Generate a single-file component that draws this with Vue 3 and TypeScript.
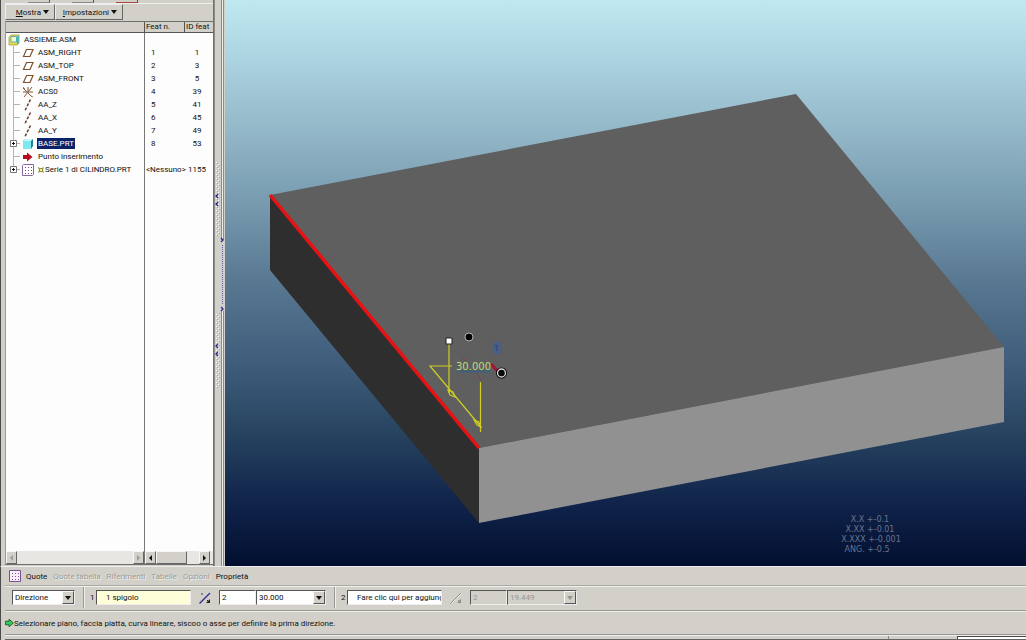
<script setup lang="ts">
import { ref } from 'vue'

type IconKind = 'asm' | 'plane' | 'csys' | 'axis' | 'part' | 'insert' | 'pattern'

interface TreeRow {
  icon: IconKind
  label: string
  feat: string
  id: string
  root?: boolean
  expandable?: boolean
  selected?: boolean
  marked?: boolean
  last?: boolean
}

const rows: TreeRow[] = [
  { icon: 'asm', label: 'ASSIEME.ASM', feat: '', id: '', root: true },
  { icon: 'plane', label: 'ASM_RIGHT', feat: '1', id: '1' },
  { icon: 'plane', label: 'ASM_TOP', feat: '2', id: '3' },
  { icon: 'plane', label: 'ASM_FRONT', feat: '3', id: '5' },
  { icon: 'csys', label: 'ACS0', feat: '4', id: '39' },
  { icon: 'axis', label: 'AA_Z', feat: '5', id: '41' },
  { icon: 'axis', label: 'AA_X', feat: '6', id: '45' },
  { icon: 'axis', label: 'AA_Y', feat: '7', id: '49' },
  { icon: 'part', label: 'BASE.PRT', feat: '8', id: '53', expandable: true, selected: true },
  { icon: 'insert', label: 'Punto inserimento', feat: '', id: '' },
  { icon: 'pattern', label: 'Serie 1 di CILINDRO.PRT', feat: '<Nessuno>', id: '1155', expandable: true, marked: true, last: true },
]

const tabs = [
  { label: 'Quote', enabled: true },
  { label: 'Quote tabella', enabled: false },
  { label: 'Riferimenti', enabled: false },
  { label: 'Tabelle', enabled: false },
  { label: 'Opzioni', enabled: false },
  { label: 'Proprietà', enabled: true },
]

const first = ref('1 spigolo')
const firstCount = ref('2')
const second = ref('Fare clic qui per aggiungere un elemento')
const secondCount = ref('2')
</script>

<template>
  <div class="app">
    <main class="work">
      <aside class="panel">
        <div class="stub"><i></i><i></i><i class="hot"></i></div>
        <div class="menus">
          <button type="button" class="menu"><span><u>M</u>ostra</span><b class="down"></b></button>
          <button type="button" class="menu wide"><span><u>I</u>mpostazioni</span><b class="down"></b></button>
        </div>
        <div class="tree">
          <table>
            <colgroup><col class="c-name" /><col class="c-feat" /><col class="c-id" /></colgroup>
            <thead>
              <tr><th aria-label="Nome"></th><th>Feat n.</th><th>ID feat</th></tr>
            </thead>
            <tbody>
              <tr v-for="row in rows" :key="row.label">
                <td>
                  <div class="node" :class="{ root: row.root }">
                    <span v-if="!row.root" class="branch" :class="{ last: row.last }">
                      <button v-if="row.expandable" type="button" class="plus" :aria-label="'Espandi ' + row.label">
                        <svg viewBox="0 0 7 7"><path d="M.5 .5h6v6h-6z" fill="#fff" stroke="#777" /><path d="M2 3.5h3M3.5 2v3" stroke="#111" /></svg>
                      </button>
                    </span>
                    <svg class="icon" viewBox="0 0 12 12" aria-hidden="true">
                      <template v-if="row.icon === 'asm'">
                        <path d="M1 3l2-2h8v8l-2 2H1z" fill="#e9dc4e" stroke="#99903a" stroke-width=".7" />
                        <path d="M9 3l2-2v8l-2 2z" fill="#45b8c2" />
                        <path d="M3 2.500h5.500V8H3z" fill="#f2fad6" stroke="#5ab0ac" stroke-width="1" />
                      </template>
                      <path v-else-if="row.icon === 'plane'" d="M4.500 2.500H11l-3 7H1.500z" fill="#fff" stroke="#81502e" stroke-width="1.2" />
                      <template v-else-if="row.icon === 'csys'">
                        <path d="M1 2l9 9M10 1L2 11M6 6h5M6 6V1M1 6h4" stroke="#805538" fill="none" />
                        <path d="M1 1l2 2M9 10l2 1" stroke="#b97952" />
                      </template>
                      <path v-else-if="row.icon === 'axis'" d="M8.500 .5L3 11.500" stroke="#713b33" stroke-width="1.500" stroke-dasharray="3 1.500" />
                      <template v-else-if="row.icon === 'part'">
                        <path d="M1 3l2-2h8v7l-2 3H1z" fill="#287d91" />
                        <path d="M1 3h8v8H1z" fill="#7be9ee" />
                        <path d="M1 3l2-2h8L9 3z" fill="#c2fafa" />
                      </template>
                      <path v-else-if="row.icon === 'insert'" d="M1 4h4V1.500L10.500 6 5 10.500V8H1z" fill="#b50d22" />
                      <template v-else>
                        <path d="M.5 1.500l1-1h10v10l-1 1H.5z" fill="#fff" stroke="#87659d" />
                        <path d="M3 3h1v1H3zM6 3h1v1H6zM9 3h1v1H9zM3 6h1v1H3zM6 6h1v1H6zM9 6h1v1H9zM3 9h1v1H3zM6 9h1v1H6zM9 9h1v1H9z" fill="#714187" />
                      </template>
                    </svg>
                    <svg v-if="row.marked" class="mark" viewBox="0 0 6 6"><path d="M0 0l2 1h2l2-1-1 3 1 3-2-1H2L0 6l1-3z" fill="#95923a" /><path d="M2 2h2v2H2z" fill="#f5f28c" /></svg>
                    <span class="name" :class="{ selected: row.selected, marked: row.marked }">{{ row.label }}</span>
                  </div>
                </td>
                <td class="feat">{{ row.feat }}</td>
                <td class="id">{{ row.id }}</td>
              </tr>
              <tr class="fill"><td></td><td colspan="2"></td></tr>
            </tbody>
          </table>
          <div class="scrolls">
            <div class="scroll name-scroll">
              <button type="button" class="arrow left off" aria-label="Sinistra"></button>
              <span class="track"></span>
              <button type="button" class="arrow right off" aria-label="Destra"></button>
            </div>
            <div class="scroll data-scroll">
              <button type="button" class="arrow left" aria-label="Sinistra"></button>
              <span class="thumb"></span><span class="track"></span>
              <button type="button" class="arrow right" aria-label="Destra"></button>
            </div>
          </div>
        </div>
      </aside>

      <div class="sash">
        <svg viewBox="0 0 11 566" preserveAspectRatio="none" aria-hidden="true">
          <defs>
            <pattern id="grip" width="4" height="4" patternUnits="userSpaceOnUse">
              <path d="M0 0h1v1H0zM2 2h1v1H2z" fill="#fff" /><path d="M1 1h1v1H1zM3 3h1v1H3z" fill="#a3a39e" />
            </pattern>
          </defs>
          <path d="M.5 0v566M7.500 0v240M9.500 0v240M7.500 311v255M9.500 311v255" stroke="#8b8b89" />
          <path d="M8.500 0v240M8.500 311v255" stroke="#eeeeea" />
          <path d="M2 162h4v74H2zM2 313h4v75H2z" fill="url(#grip)" />
          <g fill="none" stroke="#28288f" stroke-width="1.300">
            <path d="M4 194l-2 2 2 2M4 202l-2 2 2 2M4 344l-2 2 2 2M4 352l-2 2 2 2M7 238l2 2-2 2M7 307l2 2-2 2" />
          </g>
          <path d="M8.500 245v60" stroke="#5a5aa5" stroke-dasharray="1 1" />
        </svg>
      </div>

      <section class="view" aria-label="Modello">
        <svg viewBox="225 0 801 566" preserveAspectRatio="xMidYMid slice">
          <path d="M270 195L796 94 1004 347 479 448z" fill="#5f5f5f" />
          <path d="M270 195L479 448V523L270 270z" fill="#2e2e2e" />
          <path d="M479 448L1004 347V422L479 523z" fill="#919191" />
          <path d="M270 195L479 448" stroke="#e81114" stroke-width="3.500" />
          <path d="M461 356l5 5M477 374l4 6" stroke="#823c4c" />
          <ellipse cx="497" cy="348" rx="5" ry="7" fill="#49617f" />
          <path d="M495 346l2-1v6" fill="none" stroke="#37369a" />
          <path d="M458 371.500h33" stroke="#3e607d" stroke-width="2" />
          <g fill="none" stroke="#cfcc22" stroke-width="1.200">
            <path d="M449 344v49M452 366h-22l51 61M480.500 382v50" />
            <path d="M448 390l2 5 5 2-2-5zM474 420l3 5 4 2-2-5z" />
          </g>
          <path d="M446 338h6v6h-6z" fill="#fff" stroke="#222" />
          <path d="M491 364l8 9" stroke="#a51536" stroke-width="3" />
          <circle cx="469" cy="337" r="4" fill="#000" stroke="#b4b4b4" />
          <circle cx="501.500" cy="373" r="4.500" fill="#090909" stroke="#000" stroke-width="2" />
          <circle cx="501.500" cy="373" r="4" fill="#090909" stroke="#ddd" stroke-width="1.300" />
          <text x="456" y="370" class="dim">30.000</text>
          <g class="tolerance">
            <text x="870" y="522">X.X +-0.1</text>
            <text x="870" y="532">X.XX +-0.01</text>
            <text x="871" y="542">X.XXX +-0.001</text>
            <text x="867" y="552">ANG. +-0.5</text>
          </g>
        </svg>
      </section>
    </main>

    <footer class="dash">
      <nav class="tabs">
        <svg class="tab-icon" viewBox="0 0 12 12" aria-hidden="true">
          <path d="M.5 .5h11v11H.5z" fill="#f8effa" stroke="#76528e" />
          <path d="M3 3h1v1H3zM6 3h1v1H6zM9 3h1v1H9zM3 6h1v1H3zM6 6h1v1H6zM9 6h1v1H9zM3 9h1v1H3zM6 9h1v1H6zM9 9h1v1H9z" fill="#8a4d98" />
        </svg>
        <button v-for="tab in tabs" :key="tab.label" type="button" :disabled="!tab.enabled">{{ tab.label }}</button>
      </nav>
      <form class="options" @submit.prevent>
        <span class="combo kind">
          <select aria-label="Tipo di serie"><option>Direzione</option></select><i class="drop"></i>
        </span>
        <span class="rule"></span>
        <label for="dir1">1</label>
        <input id="dir1" v-model="first" class="collector active" />
        <button type="button" class="flip" aria-label="Inverti prima direzione">
          <svg viewBox="0 0 14 14"><path d="M1.500 12.500L12 2" stroke="#343591" stroke-width="1.400" /><path d="M3 2l2 2M3 4l2-2" stroke="#888" /><path d="M9 9l2 2" stroke="#222" /><path d="M12 8v4H8z" fill="#222" /></svg>
        </button>
        <input v-model="firstCount" class="count" aria-label="Numero di elementi, prima direzione" />
        <span class="combo value">
          <select aria-label="Spaziatura, prima direzione"><option>30.000</option></select><i class="drop"></i>
        </span>
        <span class="rule"></span>
        <label for="dir2">2</label>
        <input id="dir2" v-model="second" class="collector" />
        <button type="button" class="flip" aria-label="Inverti seconda direzione" disabled>
          <svg viewBox="0 0 14 14"><path d="M1.500 12.500L12 2M9 9l2 2" stroke="#8d8d8a" /><path d="M2.500 12.500L13 2" stroke="#fff" stroke-width=".6" /><path d="M12 8v4H8z" fill="#8d8d8a" /></svg>
        </button>
        <input v-model="secondCount" class="count" aria-label="Numero di elementi, seconda direzione" disabled />
        <span class="combo value off">
          <select aria-label="Spaziatura, seconda direzione" disabled><option>19.449</option></select><i class="drop"></i>
        </span>
      </form>
      <p class="message">
        <svg viewBox="0 0 10 10" aria-hidden="true"><path d="M.5 3h4V.8L9.300 5 4.500 9.200V7h-4z" fill="#2fcb5c" stroke="#175c31" /></svg>
        Selezionare piano, faccia piatta, curva lineare, siscoo o asse per definire la prima direzione.
      </p>
      <div class="status"><span class="slot"></span><span class="filter"></span></div>
    </footer>
  </div>
</template>

<style>
body {
  margin: 0;
  overflow: hidden;
}
</style>

<style scoped>
.app {
  --face: #d3d0c9;
  box-sizing: border-box;
  display: flex;
  flex-direction: column;
  height: 100vh;
  background: var(--face);
  color: #101010;
  font: 8px/13px Roboto, "Liberation Sans", sans-serif;
}

.app * {
  box-sizing: border-box;
}

button,
input,
select {
  margin: 0;
  padding: 0;
  border: 0;
  border-radius: 0;
  background: none;
  color: inherit;
  font: inherit;
}

svg {
  display: block;
}

.work {
  flex: 1;
  min-height: 0;
  display: flex;
}

.panel {
  flex: none;
  width: 214px;
  display: flex;
  flex-direction: column;
  padding-left: 4px;
  border-left: 1px solid #4b4b4b;
  border-right: 1px solid #70706e;
}

.stub {
  display: flex;
  gap: 22px;
  height: 4px;
  padding-left: 23px;
  border-bottom: 1px solid #eee;
}

.stub i {
  width: 22px;
  height: 3px;
  border-right: 1px solid #555;
  border-bottom: 1px solid #8b8b89;
}

.stub .hot {
  border-bottom-color: #a44a3c;
}

.menus {
  display: flex;
  height: 17px;
  padding-bottom: 1px;
}

.menu {
  display: flex;
  align-items: center;
  justify-content: flex-end;
  gap: 2px;
  width: 50px;
  padding-right: 5px;
  border: 1px solid;
  border-color: #eee #666 #666 #eee;
}

.menu.wide {
  width: 68px;
}

.down {
  border: 3px solid transparent;
  border-top: 4px solid #111;
  border-bottom: 0;
}

.tree {
  flex: 1;
  min-height: 0;
  display: flex;
  flex-direction: column;
  margin-bottom: 1px;
  background: #fdfdfd;
  border: 1px solid #70706e;
  border-right: 0;
  border-left-color: #999;
}

table {
  flex: 1;
  width: 100%;
  table-layout: fixed;
  border-collapse: separate;
  border-spacing: 0;
}

.c-name {
  width: 139px;
}

.c-feat {
  width: 40px;
}

th,
td {
  height: 13px;
  padding: 0;
  font-weight: normal;
  white-space: nowrap;
}

th {
  height: 11px;
  line-height: 10px;
  padding-left: 1px;
  background: var(--face);
  border-bottom: 1px solid #555;
  border-right: 1px solid #555;
  text-align: left;
}

th:last-child {
  border-right: 0;
}

td:first-child {
  border-right: 1px solid #777;
}

td.feat {
  padding-left: 6px;
}

tr:nth-last-child(2) td.feat {
  padding-left: 1px;
}

td.id {
  padding-right: 4px;
  text-align: center;
}

.fill td {
  height: auto;
}

.node {
  display: flex;
  align-items: center;
  height: 13px;
}

.branch {
  flex: none;
  display: flex;
  align-items: center;
  width: 14px;
  height: 13px;
  padding-left: 4px;
  background:
    linear-gradient(#b4b4b4, #b4b4b4) 7px 0 / 1px 13px no-repeat,
    linear-gradient(#b4b4b4, #b4b4b4) 7px 6px / 7px 1px no-repeat;
}

.branch.last {
  background:
    linear-gradient(#b4b4b4, #b4b4b4) 7px 0 / 1px 7px no-repeat,
    linear-gradient(#b4b4b4, #b4b4b4) 7px 6px / 7px 1px no-repeat;
}

.plus,
.plus svg {
  width: 7px;
  height: 7px;
}

.icon {
  flex: none;
  width: 12px;
  height: 12px;
  margin-left: 2px;
}

.name {
  margin-left: 3px;
  padding: 0 1px;
  line-height: 11px;
}

.name.selected {
  background: #0b2268;
  color: #fff;
}

.mark {
  flex: none;
  width: 6px;
  height: 6px;
  margin-left: 4px;
}

.name.marked {
  margin-left: 0;
}

.scrolls {
  display: flex;
  height: 13px;
  background: #e7e6e2;
}

.scroll {
  display: flex;
}

.name-scroll {
  width: 139px;
  border-right: 1px solid #777;
}

.data-scroll {
  flex: 1;
  padding-right: 3px;
}

.arrow {
  display: grid;
  place-items: center;
  width: 11px;
  background: var(--face);
  border: 1px solid;
  border-color: #f7f7f5 #666 #666 #f7f7f5;
}

.arrow::before {
  content: "";
  border: 3px solid transparent;
}

.arrow.left::before {
  border-left: 0;
  border-right-color: #111;
}

.arrow.right::before {
  border-right: 0;
  border-left-color: #111;
}

.arrow.off.left::before {
  border-right-color: #999;
}

.arrow.off.right::before {
  border-left-color: #999;
}

.track {
  flex: 1;
}

.thumb {
  width: 31px;
  background: var(--face);
  border: 1px solid;
  border-color: #f7f7f5 #666 #666 #f7f7f5;
}

.sash {
  flex: none;
  width: 11px;
}

.sash svg {
  width: 100%;
  height: 100%;
}

.view {
  flex: 1;
  min-width: 0;
  background: linear-gradient(#bfe9f1 0%, #a9d0de 12%, #8db1c2 26%, #7093a9 39%, #56758f 51%, #3e5c7a 65%, #26425f 77%, #10234a 89%, #020f30 100%);
}

.view svg {
  width: 100%;
  height: 100%;
}

.dim {
  fill: #b9dc7c;
  font: 10px "DejaVu Sans", sans-serif;
}

.tolerance {
  fill: #66748f;
  font: 8px "DejaVu Sans", sans-serif;
  text-anchor: middle;
}

.dash {
  flex: none;
  padding-left: 4px;
  border-left: 1px solid #4b4b4b;
  border-top: 1px solid #eee;
}

.tabs {
  display: flex;
  align-items: center;
  gap: 6px;
  height: 19px;
  padding-left: 4px;
  border-bottom: 1px solid #aaa9a4;
}

.tab-icon {
  width: 12px;
  height: 12px;
  margin-right: -1px;
}

.tabs button:disabled {
  color: #9b9a96;
  text-shadow: 1px 1px #f0f0ed;
}

.options {
  display: flex;
  align-items: center;
  height: 25px;
  padding: 0 0 2px 7px;
  border-top: 1px solid #f0f0ed;
  border-bottom: 1px solid #979692;
}

.options label {
  width: 6px;
}

.combo {
  display: grid;
  grid-template-columns: 1fr 12px;
  height: 15px;
  background: #fff;
  border: 1px solid;
  border-color: #555 #eee #eee #555;
}

.combo select {
  grid-area: 1 / 1 / 2 / 3;
  width: 100%;
  padding-left: 2px;
  appearance: none;
}

.drop {
  grid-area: 1 / 2;
  display: grid;
  place-items: center;
  background: var(--face);
  border: 1px solid;
  border-color: #f7f7f5 #555 #555 #f7f7f5;
  pointer-events: none;
}

.drop::before {
  content: "";
  border: 3px solid transparent;
  border-top: 4px solid #111;
  border-bottom: 0;
}

.combo.kind {
  width: 63px;
}

.combo.value {
  width: 70px;
}

.combo.off {
  background: var(--face);
}

.off select,
input:disabled {
  color: #969591;
  opacity: 1;
}

.off .drop::before {
  border-top-color: #969591;
}

.rule {
  width: 2px;
  height: 21px;
  margin: 0 5px 0 8px;
  border-left: 1px solid #999;
  border-right: 1px solid #eee;
}

.options input {
  height: 15px;
  border: 1px solid;
  border-color: #555 #eee #eee #555;
  background: #fff;
}

.options .collector {
  width: 95px;
  padding-left: 9px;
}

.options .active {
  background: #fefed9;
}

.options .count {
  width: 37px;
  padding-left: 2px;
}

.options input:disabled {
  background: var(--face);
}

.flip {
  width: 14px;
  height: 14px;
  margin: 0 7px;
}

.message {
  display: flex;
  align-items: center;
  height: 24px;
  margin: 0;
  border-top: 1px solid #f0f0ed;
  border-bottom: 1px solid #979692;
}

.message svg {
  width: 9px;
  height: 10px;
}

.status {
  display: flex;
  justify-content: flex-end;
  height: 5px;
  border-top: 1px solid #f0f0ed;
  border-bottom: 1px solid #666;
}

.slot {
  width: 69px;
  border-left: 1px solid #888;
}

.filter {
  width: 69px;
  background: #fff;
  border-left: 1px solid #444;
  border-top: 1px solid #444;
}
</style>
